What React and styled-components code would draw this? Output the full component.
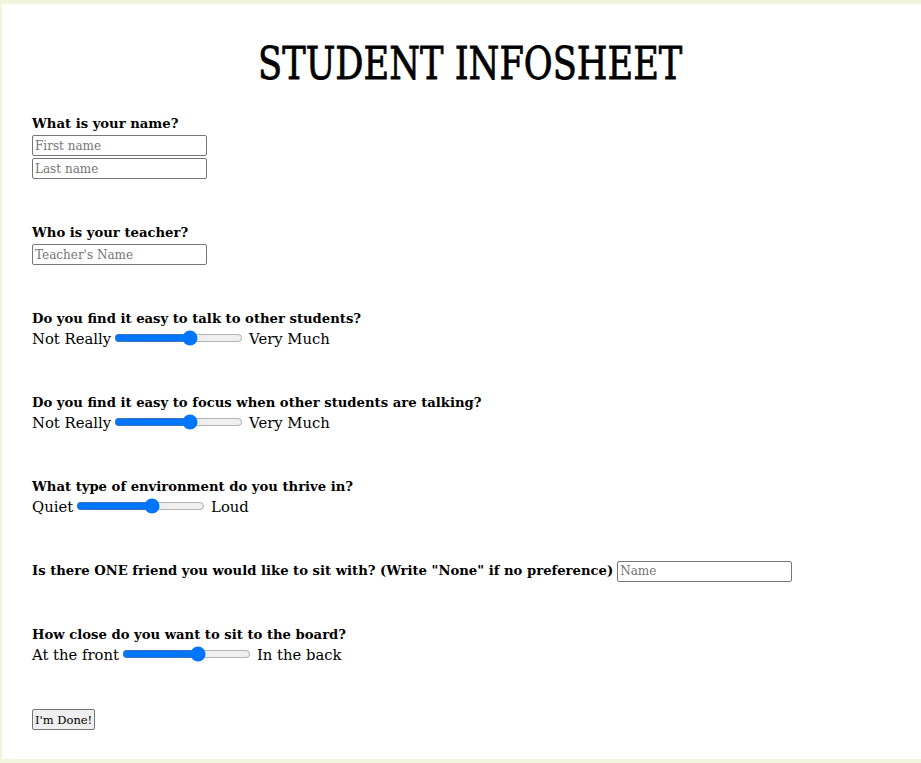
import React from "react";
import styled, { createGlobalStyle } from "styled-components";

const Global = createGlobalStyle`
  html, body { margin: 0; padding: 0; overflow: hidden; }
  body {
    background: #f0f5dc;
    font-family: "DejaVu Serif", "Liberation Serif", serif;
    color: #000;
  }
`;

const Sheet = styled.main`
  box-sizing: border-box;
  width: 936px;
  min-height: 755px;
  margin: 4px 0 4px 2px;
  background: #fff;
  padding: 38px 30px 28px 30px;
`;

const Title = styled.h1`
  margin: 0 0 28px 0;
  text-align: center;
  font-weight: 400;
  font-size: 44px;
  line-height: 44px;
`;

const TitleText = styled.span`
  display: inline-block;
  transform: scaleX(0.8);
  transform-origin: 50% 50%;
  -webkit-text-stroke: 0.8px #000;
`;

const Form = styled.form`
  display: flex;
  flex-direction: column;
  align-items: flex-start;
  gap: 44px;
`;

const Question = styled.div`
  display: flex;
  flex-direction: column;
  align-items: flex-start;
`;

const Label = styled.div`
  font-weight: 700;
  font-size: 13.2px;
  line-height: 20px;
  height: 20px;
  white-space: nowrap;
`;

const Row = styled.div`
  display: flex;
  align-items: center;
  font-size: 14.8px;
  line-height: 20px;
  height: 20px;
  white-space: nowrap;
`;

const InlineRow = styled.div`
  display: flex;
  align-items: center;
  gap: 4px;
  height: 20px;
`;

const TextInput = styled.input`
  box-sizing: border-box;
  width: 175px;
  height: 21px;
  margin: ${(p) => p.$mt || 0}px 0 0 0;
  padding: 1px 2px;
  border: 1px solid #767676;
  border-radius: 2px;
  font-family: inherit;
  font-size: 12px;
  &::placeholder { color: #757575; }
`;

const Slider = styled.input`
  width: 129px;
  margin: 0 6px 3px 3px;
`;

const DoneButton = styled.button`
  box-sizing: border-box;
  height: 21px;
  padding: 1px 2px;
  border: 1px solid #767676;
  border-radius: 2px;
  background: #efefef;
  font-family: inherit;
  font-size: 11.5px;
  color: #000;
`;

function SliderRow({ left, right }) {
  return (
    <Row>
      <span>{left}</span>
      <Slider type="range" defaultValue={60} />
      <span>{right}</span>
    </Row>
  );
}

export default function App() {
  return (
    <>
      <Global />
      <Sheet>
        <Title>
          <TitleText>STUDENT INFOSHEET</TitleText>
        </Title>
        <Form onSubmit={(e) => e.preventDefault()}>
          <Question>
            <Label>What is your name?</Label>
            <TextInput placeholder="First name" $mt={1} />
            <TextInput placeholder="Last name" $mt={2} />
          </Question>
          <Question>
            <Label>Who is your teacher?</Label>
            <TextInput placeholder="Teacher's Name" $mt={1} />
          </Question>
          <Question>
            <Label>Do you find it easy to talk to other students?</Label>
            <SliderRow left="Not Really" right="Very Much" />
          </Question>
          <Question>
            <Label>Do you find it easy to focus when other students are talking?</Label>
            <SliderRow left="Not Really" right="Very Much" />
          </Question>
          <Question>
            <Label>What type of environment do you thrive in?</Label>
            <SliderRow left="Quiet" right="Loud" />
          </Question>
          <InlineRow>
            <Label>Is there ONE friend you would like to sit with? (Write "None" if no preference)</Label>
            <TextInput placeholder="Name" />
          </InlineRow>
          <Question>
            <Label>How close do you want to sit to the board?</Label>
            <SliderRow left="At the front" right="In the back" />
          </Question>
          <DoneButton type="submit">I'm Done!</DoneButton>
        </Form>
      </Sheet>
    </>
  );
}
